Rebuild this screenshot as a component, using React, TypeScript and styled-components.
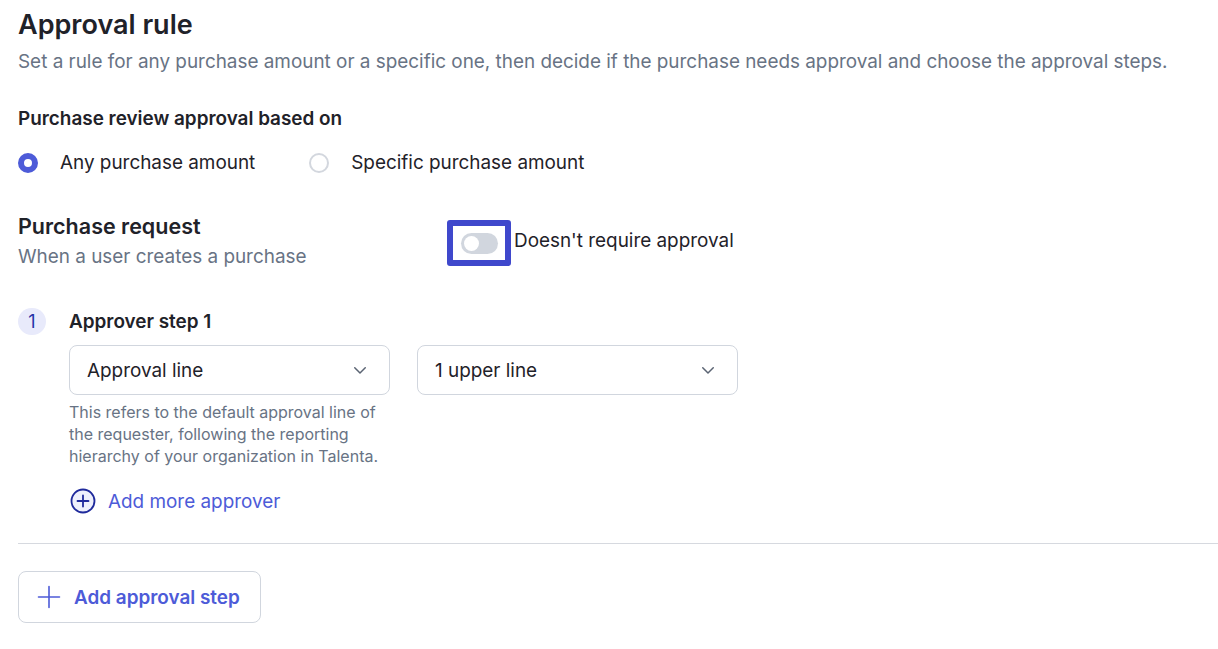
import React from 'react';
import styled, { createGlobalStyle } from 'styled-components';

const GlobalStyle = createGlobalStyle`
  body {
    margin: 0;
    background: #ffffff;
    font-family: Inter, "Noto Sans", sans-serif;
    color: #1f2229;
  }
`;

const Page = styled.div`
  padding: 7px 0 0 18px;
  display: flex;
  flex-direction: column;
`;

const Title = styled.h1`
  margin: 0;
  font-size: 27px;
  line-height: 36px;
  font-weight: 600;
  color: #1f2229;
`;

const Subtitle = styled.p`
  margin: 1px 0 0;
  font-size: 18.9px;
  line-height: 36px;
  color: #687384;
`;

const SectionLabel = styled.h2`
  margin: 25px 0 0;
  font-size: 18.9px;
  line-height: 28px;
  font-weight: 600;
  color: #1f2229;
`;

const RadioRow = styled.div`
  display: flex;
  gap: 54px;
  margin-top: 16px;
`;

const RadioOption = styled.label`
  display: flex;
  align-items: center;
  gap: 22px;
  font-size: 18.9px;
  line-height: 28px;
  color: #1f2229;
`;

const RadioDot = styled.span<{ checked?: boolean }>`
  width: 20px;
  height: 20px;
  box-sizing: border-box;
  border-radius: 50%;
  border: ${({ checked }) => (checked ? '6px solid #4d5bd8' : '2px solid #d3d7de')};
  background: #fff;
`;

const RequestRow = styled.div`
  display: flex;
  align-items: flex-start;
  margin-top: 34px;
`;

const RequestText = styled.div`
  width: 429px;
  display: flex;
  flex-direction: column;
`;

const RequestTitle = styled.div`
  font-size: 21.5px;
  line-height: 30px;
  font-weight: 600;
  color: #1f2229;
`;

const RequestHint = styled.div`
  font-size: 18.9px;
  line-height: 32px;
  color: #687384;
`;

const ToggleWrap = styled.div`
  display: flex;
  align-items: center;
  gap: 3px;
  margin-top: 9px;
`;

const FocusRing = styled.div`
  width: 64px;
  height: 46px;
  box-sizing: border-box;
  border: 6px solid #3f48cc;
  border-radius: 3px;
  display: flex;
  align-items: center;
  justify-content: center;
`;

const Track = styled.div`
  width: 37px;
  height: 21px;
  border-radius: 11px;
  background: #d1d6de;
  display: flex;
  align-items: center;
  padding-left: 3px;
  box-sizing: border-box;
`;

const Knob = styled.span`
  width: 15px;
  height: 15px;
  border-radius: 50%;
  background: #fff;
`;

const ToggleLabel = styled.span`
  font-size: 18.9px;
  line-height: 28px;
  color: #1f2229;
  margin-top: -5px;
`;

const StepRow = styled.div`
  display: flex;
  gap: 23px;
  margin-top: 35px;
`;

const StepBadge = styled.div`
  width: 28px;
  height: 27px;
  border-radius: 14px;
  background: #e8eafb;
  color: #2533a8;
  font-size: 18px;
  display: flex;
  align-items: center;
  justify-content: center;
  flex-shrink: 0;
`;

const StepBody = styled.div`
  display: flex;
  flex-direction: column;
`;

const StepTitle = styled.div`
  font-size: 18.9px;
  line-height: 28px;
  font-weight: 600;
  color: #1f2229;
`;

const SelectRow = styled.div`
  display: flex;
  gap: 27px;
  margin-top: 9px;
`;

const SelectCol = styled.div`
  width: 321px;
  display: flex;
  flex-direction: column;
`;

const SelectBox = styled.div`
  height: 50px;
  box-sizing: border-box;
  border: 1px solid #d1d6de;
  border-radius: 8px;
  padding: 0 20px 0 17px;
  display: flex;
  align-items: center;
  justify-content: space-between;
  font-size: 18.9px;
  color: #1f2229;
`;

const HelpText = styled.p`
  margin: 6px 0 0;
  font-size: 16px;
  line-height: 22px;
  color: #687384;
  width: 320px;
`;

const LinkButton = styled.button`
  margin-top: 21px;
  background: none;
  border: none;
  padding: 0 0 0 1px;
  display: flex;
  align-items: center;
  gap: 12px;
  font-family: inherit;
  font-size: 18.9px;
  color: #4d5bd8;
  cursor: pointer;
`;

const Divider = styled.hr`
  margin: 29px 0 0;
  border: none;
  border-top: 1px solid #d6d9df;
`;

const OutlineButton = styled.button`
  margin-top: 27px;
  align-self: flex-start;
  height: 52px;
  width: 243px;
  box-sizing: border-box;
  border: 1px solid #d1d6de;
  border-radius: 8px;
  background: #fff;
  display: flex;
  align-items: center;
  gap: 13px;
  padding: 0 0 0 18px;
  font-family: inherit;
  font-size: 18.9px;
  font-weight: 600;
  color: #4d5bd8;
  cursor: pointer;
`;

const Chevron = () => (
  <svg width="18" height="18" viewBox="0 0 24 24" fill="none" stroke="#5b6473" strokeWidth="2" strokeLinecap="round" strokeLinejoin="round">
    <path d="M5 9l7 7 7-7" />
  </svg>
);

const PlusCircle = () => (
  <svg width="26" height="26" viewBox="0 0 26 26" fill="none" stroke="#1f2a9c" strokeWidth="1.8" strokeLinecap="round">
    <circle cx="13" cy="13" r="11.5" fill="#eef0fc" />
    <path d="M13 7.5v11M7.5 13h11" />
  </svg>
);

const Plus = () => (
  <svg width="24" height="24" viewBox="0 0 24 24" fill="none" stroke="#4d5bd8" strokeWidth="1.6" strokeLinecap="round">
    <path d="M12 1.5v21M1.5 12h21" />
  </svg>
);

const App: React.FC = () => (
  <>
    <GlobalStyle />
    <Page>
      <Title>Approval rule</Title>
      <Subtitle>
        Set a rule for any purchase amount or a specific one, then decide if the purchase needs approval and choose the approval steps.
      </Subtitle>

      <SectionLabel>Purchase review approval based on</SectionLabel>
      <RadioRow>
        <RadioOption>
          <RadioDot checked />
          Any purchase amount
        </RadioOption>
        <RadioOption>
          <RadioDot />
          Specific purchase amount
        </RadioOption>
      </RadioRow>

      <RequestRow>
        <RequestText>
          <RequestTitle>Purchase request</RequestTitle>
          <RequestHint>When a user creates a purchase</RequestHint>
        </RequestText>
        <ToggleWrap>
          <FocusRing>
            <Track>
              <Knob />
            </Track>
          </FocusRing>
          <ToggleLabel>Doesn't require approval</ToggleLabel>
        </ToggleWrap>
      </RequestRow>

      <StepRow>
        <StepBadge>1</StepBadge>
        <StepBody>
          <StepTitle>Approver step 1</StepTitle>
          <SelectRow>
            <SelectCol>
              <SelectBox>
                Approval line
                <Chevron />
              </SelectBox>
              <HelpText>
                This refers to the default approval line of the requester, following the reporting hierarchy of your organization in Talenta.
              </HelpText>
            </SelectCol>
            <SelectCol>
              <SelectBox>
                1 upper line
                <Chevron />
              </SelectBox>
            </SelectCol>
          </SelectRow>
          <LinkButton>
            <PlusCircle />
            Add more approver
          </LinkButton>
        </StepBody>
      </StepRow>

      <Divider />

      <OutlineButton>
        <Plus />
        Add approval step
      </OutlineButton>
    </Page>
  </>
);

export default App;
